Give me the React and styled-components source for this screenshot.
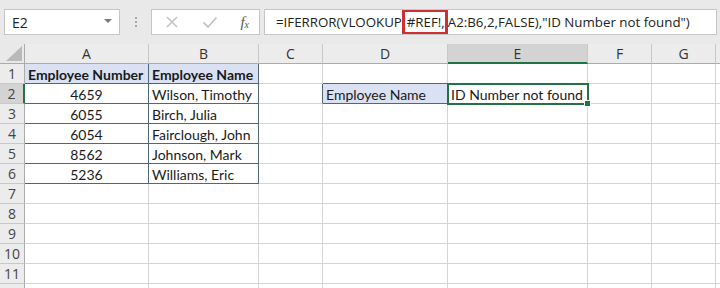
import styled, { createGlobalStyle } from "styled-components";

const GlobalStyle = createGlobalStyle`
  body {
    margin: 0;
    background: #ffffff;
  }
`;

const COLS = [25, 124, 110, 64, 125, 140, 64, 64, 64];
const LETTERS = ["A", "B", "C", "D", "E", "F", "G", ""];
const GRID = "#d4d4d4";
const DARK = "#52667a";
const GREEN = "#217346";
const BLUE = "#d9e1f2";

const data = [
  ["4659", "Wilson, Timothy"],
  ["6055", "Birch, Julia"],
  ["6054", "Fairclough, John"],
  ["8562", "Johnson, Mark"],
  ["5236", "Williams, Eric"],
];

export default function App() {
  const rows = [];
  for (let r = 1; r <= 12; r++) {
    const cells = [];
    const inTable = r <= 6;
    const rec = r >= 2 && r <= 6 ? data[r - 2] : null;

    // A
    cells.push(
      <Cell key="A" $right={inTable ? DARK : GRID} $bottom={inTable ? DARK : GRID}
        $bg={r === 1 ? BLUE : "#fff"} $bold={r === 1} $align={r === 1 ? "left" : "center"}>
        {r === 1 ? "Employee Number" : rec ? rec[0] : ""}
      </Cell>
    );
    // B
    cells.push(
      <Cell key="B" $right={inTable ? DARK : GRID} $bottom={inTable ? DARK : GRID}
        $bg={r === 1 ? BLUE : "#fff"} $bold={r === 1}>
        {r === 1 ? "Employee Name" : rec ? rec[1] : ""}
      </Cell>
    );
    // C
    cells.push(<Cell key="C" $right={r === 2 ? DARK : GRID} />);
    // D
    cells.push(
      <Cell key="D" $right={r === 2 ? DARK : GRID} $bottom={r <= 2 ? DARK : GRID}
        $bg={r === 2 ? BLUE : "#fff"}>
        {r === 2 ? "Employee Name" : ""}
      </Cell>
    );
    // E
    cells.push(
      <Cell key="E" $selected={r === 2}>
        {r === 2 && (
          <>
            ID Number not found
            <Selection>
              <FillHandle />
            </Selection>
          </>
        )}
      </Cell>
    );
    cells.push(<Cell key="F" />, <Cell key="G" />, <Cell key="H" />);

    rows.push(
      <RowHead key={`h${r}`} $active={r === 2}>{r < 12 ? r : ""}</RowHead>,
      ...cells.map((c) => ({ ...c, key: `${r}-${c.key}` }))
    );
  }

  return (
    <>
      <GlobalStyle />
      <Frame>
        <TopBar>
          <NameBox>
            <span>E2</span>
            <DropArrow />
          </NameBox>
          <Grip>
            <i />
            <i />
            <i />
          </Grip>
          <FxBox>
            <svg width="14" height="14" viewBox="0 0 14 14">
              <path d="M2 2 L12 12 M12 2 L2 12" stroke="#c4c4c4" strokeWidth="1.6" fill="none" />
            </svg>
            <svg width="16" height="14" viewBox="0 0 16 14">
              <path d="M1.5 7.5 L6 12 L14.5 2.5" stroke="#c4c4c4" strokeWidth="1.8" fill="none" />
            </svg>
            <FxLabel>f<sub>x</sub></FxLabel>
          </FxBox>
          <FormulaBox>
            =IFERROR(VLOOKUP(<RefBox>#REF!,</RefBox>A2:B6,2,FALSE),"ID Number not found")
          </FormulaBox>
        </TopBar>
        <Sheet>
          <Corner>
            <svg width="16" height="15" viewBox="0 0 16 15">
              <polygon points="16,0 16,15 0,15" fill="#b9b9b9" />
            </svg>
          </Corner>
          {LETTERS.map((l, i) => (
            <ColHead key={i} $active={l === "E"}>{l}</ColHead>
          ))}
          {rows}
        </Sheet>
      </Frame>
    </>
  );
}

const Frame = styled.div`
  width: 720px;
  height: 288px;
  overflow: hidden;
  background: #ffffff;
`;

const TopBar = styled.div`
  height: 44px;
  box-sizing: border-box;
  background: #e9e9e9;
  display: flex;
  align-items: flex-start;
  padding: 9px 0 0 4px;
  font-family: "Open Sans", "Noto Sans", sans-serif;
  font-size: 13.3px;
  color: #222;
`;

const NameBox = styled.div`
  width: 116px;
  height: 26px;
  box-sizing: border-box;
  background: #fff;
  border: 1px solid #c6c6c6;
  display: flex;
  align-items: center;
  justify-content: space-between;
  padding: 0 7px 0 7px;
  font-size: 14px;
`;

const DropArrow = styled.span`
  width: 0;
  height: 0;
  border-left: 4px solid transparent;
  border-right: 4px solid transparent;
  border-top: 4px solid #7a7a7a;
  margin-bottom: 2px;
`;

const Grip = styled.div`
  width: 31px;
  height: 26px;
  display: flex;
  flex-direction: column;
  align-items: center;
  justify-content: center;
  gap: 2px;

  i {
    width: 2px;
    height: 2px;
    background: #a8a8a8;
  }
`;

const FxBox = styled.div`
  width: 109px;
  height: 26px;
  box-sizing: border-box;
  background: #fff;
  border: 1px solid #c6c6c6;
  display: flex;
  align-items: center;
  justify-content: space-between;
  padding: 0 10px 0 13px;
`;

const FxLabel = styled.span`
  font-family: "Liberation Serif", "DejaVu Serif", serif;
  font-style: italic;
  font-size: 15px;
  color: #555;

  sub {
    font-size: 10px;
    vertical-align: -1px;
  }
`;

const FormulaBox = styled.div`
  flex: 1;
  height: 26px;
  margin: 0 3px 0 4px;
  box-sizing: border-box;
  background: #fff;
  border: 1px solid #c6c6c6;
  display: flex;
  align-items: center;
  padding-left: 11px;
  white-space: nowrap;
  overflow: hidden;
`;

const RefBox = styled.span`
  display: flex;
  align-items: center;
  align-self: stretch;
  margin: -1px 0 -1px -4px;
  padding: 0 0 0 2px;
  border: 3px solid #cf2f33;
`;

const Sheet = styled.div`
  position: relative;
  display: grid;
  grid-template-columns: ${COLS.map((c) => `${c}px`).join(" ")};
  grid-auto-rows: 20px;
  font-family: "Lato", "Liberation Sans", sans-serif;
  font-size: 14px;
  color: #1a1a1a;
`;

const Corner = styled.div`
  box-sizing: border-box;
  background: #e9e9e9;
  border-right: 1px solid #ababab;
  border-bottom: 1px solid #ababab;
  display: flex;
  align-items: flex-end;
  justify-content: flex-end;
  padding: 0 2px 2px 0;
`;

const ColHead = styled.div`
  box-sizing: border-box;
  background: ${(p) => (p.$active ? "#d3d3d3" : "#ececec")};
  border-right: 1px solid #c8c8c8;
  border-bottom: ${(p) => (p.$active ? `2px solid ${GREEN}` : "1px solid #ababab")};
  display: flex;
  align-items: center;
  justify-content: center;
  font-family: "Open Sans", "Noto Sans", sans-serif;
  font-size: 14px;
  color: #333;
  padding-top: ${(p) => (p.$active ? "1px" : "0")};
`;

const RowHead = styled.div`
  box-sizing: border-box;
  background: ${(p) => (p.$active ? "#d3d3d3" : "#ececec")};
  border-right: ${(p) => (p.$active ? `2px solid ${GREEN}` : "1px solid #ababab")};
  border-bottom: 1px solid #c8c8c8;
  display: flex;
  align-items: center;
  justify-content: center;
  font-family: "Open Sans", "Noto Sans", sans-serif;
  font-size: 14px;
  color: #444;
`;

const Cell = styled.div`
  position: ${(p) => (p.$selected ? "relative" : "static")};
  z-index: ${(p) => (p.$selected ? 2 : "auto")};
  box-sizing: border-box;
  background: ${(p) => p.$bg || "#fff"};
  border-right: 1px solid ${(p) => p.$right || GRID};
  border-bottom: 1px solid ${(p) => p.$bottom || GRID};
  font-weight: ${(p) => (p.$bold ? 700 : 400)};
  text-align: ${(p) => p.$align || "left"};
  line-height: 19px;
  padding: 1px 3px 0;
  white-space: nowrap;
`;

const Selection = styled.div`
  position: absolute;
  top: -1px;
  left: -1px;
  width: 142px;
  height: 22px;
  box-sizing: border-box;
  border: 2px solid ${GREEN};
  pointer-events: none;
`;

const FillHandle = styled.div`
  position: absolute;
  right: -4px;
  bottom: -4px;
  width: 5px;
  height: 5px;
  background: ${GREEN};
  border: 1px solid #fff;
`;
